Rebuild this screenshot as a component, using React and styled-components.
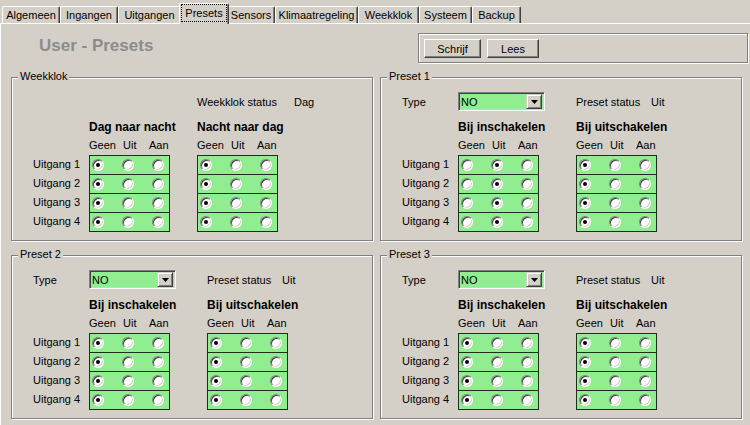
import React from 'react';
import styled, { createGlobalStyle } from 'styled-components';

const GlobalStyle = createGlobalStyle`
  body {
    margin: 0;
    background: #d4d0c8;
    font-family: "Liberation Sans", Arial, sans-serif;
    font-size: 11px;
    color: #000;
  }
`;

const Page = styled.div`
  width: 750px;
  height: 425px;
  overflow: hidden;
  background: #d4d0c8;
`;

const TabStrip = styled.div`
  display: flex;
  align-items: flex-end;
  height: 23px;
  padding-left: 2px;
`;

const Tab = styled.div`
  box-sizing: border-box;
  position: relative;
  z-index: ${p => (p.$active ? 1 : 0)};
  width: ${p => p.$w}px;
  height: ${p => (p.$active ? 21 : 17)}px;
  margin: 0 ${p => (p.$active ? -2 : 0)}px ${p => (p.$active ? -1 : 0)}px;
  display: flex;
  align-items: center;
  justify-content: center;
  background: #d4d0c8;
  border-top: 1px solid #fff;
  border-left: 1px solid #fff;
  border-right: 1px solid #404040;
  border-radius: 2px 2px 0 0;
  box-shadow: inset -1px 0 0 #808080;
  white-space: nowrap;
`;

const FocusText = styled.span`
  outline: 1px dotted #000;
  padding: 1px 3px;
  line-height: 14px;
  margin-top: -2px;
`;

const Panel = styled.div`
  box-sizing: border-box;
  height: 402px;
  border-top: 1px solid #fff;
  border-left: 1px solid #fff;
`;

const Header = styled.div`
  display: flex;
  justify-content: space-between;
  height: 30px;
  margin-top: 9px;
  padding: 0 2px 0 38px;
`;

const Title = styled.div`
  margin-top: 3px;
  font-size: 17px;
  line-height: 20px;
  font-weight: bold;
  color: #8c8c8c;
`;

const etched = `
  border: 1px solid #808080;
  box-shadow: 1px 1px 0 #fff, inset 1px 1px 0 #fff;
`;

const ButtonBox = styled.div`
  box-sizing: border-box;
  width: 330px;
  height: 30px;
  ${etched}
  display: flex;
  align-items: flex-start;
  gap: 6px;
  padding: 5px 0 0 5px;
`;

const Button = styled.button`
  box-sizing: border-box;
  width: ${p => p.$w}px;
  height: 19px;
  padding: 0;
  font-family: inherit;
  font-size: 11px;
  color: #000;
  background: #d4d0c8;
  border: 1px solid;
  border-color: #fff #404040 #404040 #fff;
  box-shadow: inset -1px -1px 0 #808080;
`;

const Groups = styled.div`
  display: grid;
  grid-template-columns: 362px 362px;
  column-gap: 7px;
  row-gap: 14px;
  margin-top: 14px;
  padding-left: 10px;
`;

const Group = styled.div`
  position: relative;
  box-sizing: border-box;
  height: 164px;
  ${etched}
  padding: 14px 0 0 21px;
`;

const Legend = styled.span`
  position: absolute;
  top: -8px;
  left: 6px;
  padding: 0 2px;
  line-height: 13px;
  background: #d4d0c8;
`;

const Body = styled.div`
  display: grid;
  grid-template-columns: 56px ${p => p.$col}px auto;
  grid-template-rows: 19px 24px 20px auto;
`;

const Cell = styled.div`
  display: flex;
  align-items: center;
  white-space: nowrap;
  grid-column: ${p => p.$col || 'auto'};
`;

const Heading = styled.div`
  align-self: end;
  font-size: 12px;
  font-weight: bold;
  line-height: 15px;
  white-space: nowrap;
`;

const ColLabels = styled.div`
  align-self: center;
  display: grid;
  grid-template-columns: 34px 26px auto;
  line-height: 13px;
`;

const StatusLabel = styled.span`
  min-width: ${p => p.$w}px;
`;

const Select = styled.div`
  box-sizing: border-box;
  width: 87px;
  height: 19px;
  display: flex;
  align-items: center;
  justify-content: space-between;
  padding: 2px 2px 2px 2px;
  background: #90ee90;
  border: 1px solid;
  border-color: #808080 #fff #fff #808080;
  box-shadow: inset 1px 1px 0 #404040, inset -1px -1px 0 #d4d0c8;
`;

const DropButton = styled.span`
  box-sizing: border-box;
  width: 16px;
  height: 15px;
  display: flex;
  align-items: center;
  justify-content: center;
  background: #d4d0c8;
  border: 1px solid;
  border-color: #d4d0c8 #404040 #404040 #d4d0c8;
  box-shadow: inset 1px 1px 0 #fff, inset -1px -1px 0 #808080;
`;

const RowLabels = styled.div`
  display: flex;
  flex-direction: column;
`;

const RowLabel = styled.div`
  height: 19px;
  line-height: 19px;
  white-space: nowrap;
`;

const RadioTable = styled.div`
  box-sizing: border-box;
  width: 81px;
  border: 1px solid #1c2e1c;
  background: #90ee90;
`;

const RadioRow = styled.div`
  height: 18px;
  display: flex;
  align-items: center;
  gap: 18px;
  padding-left: 2px;
  & + & {
    border-top: 1px solid #1c2e1c;
  }
`;

const Radio = styled.span`
  box-sizing: border-box;
  width: 12px;
  height: 12px;
  border-radius: 50%;
  display: flex;
  align-items: center;
  justify-content: center;
  background: #fff;
  border: 1px solid;
  border-color: #808080 #fff #fff #808080;
  box-shadow: inset 1px 1px 0 #404040, inset -1px -1px 0 #d4d0c8;
  &::after {
    content: '';
    display: ${p => (p.$on ? 'block' : 'none')};
    width: 4px;
    height: 4px;
    border-radius: 50%;
    background: #000;
  }
`;

const tabs = [
  ['Algemeen', 58],
  ['Ingangen', 58],
  ['Uitgangen', 63],
  ['Presets', 50],
  ['Sensors', 48],
  ['Klimaatregeling', 83],
  ['Weekklok', 61],
  ['Systeem', 53],
  ['Backup', 49],
];

const groups = [
  { title: 'Weekklok', col: 108, headings: ['Dag naar nacht', 'Nacht naar dag'], sel: [0, 0], status: ['Weekklok status', 'Dag'], statusW: 97 },
  { title: 'Preset 1', type: 'NO', col: 118, headings: ['Bij inschakelen', 'Bij uitschakelen'], sel: [1, 0], status: ['Preset status', 'Uit'], statusW: 75 },
  { title: 'Preset 2', type: 'NO', col: 118, headings: ['Bij inschakelen', 'Bij uitschakelen'], sel: [0, 0], status: ['Preset status', 'Uit'], statusW: 75 },
  { title: 'Preset 3', type: 'NO', col: 118, headings: ['Bij inschakelen', 'Bij uitschakelen'], sel: [0, 0], status: ['Preset status', 'Uit'], statusW: 75 },
];

const outputs = ['Uitgang 1', 'Uitgang 2', 'Uitgang 3', 'Uitgang 4'];

const Table = ({ selected }) => (
  <RadioTable>
    {outputs.map(o => (
      <RadioRow key={o}>
        {[0, 1, 2].map(i => (
          <Radio key={i} $on={i === selected} />
        ))}
      </RadioRow>
    ))}
  </RadioTable>
);

const Columns = () => (
  <ColLabels>
    <span>Geen</span>
    <span>Uit</span>
    <span>Aan</span>
  </ColLabels>
);

const GroupBox = ({ g }) => (
  <Group>
    <Legend>{g.title}</Legend>
    <Body $col={g.col}>
      {g.type ? (
        <>
          <Cell>Type</Cell>
          <Cell>
            <Select>
              <span>{g.type}</span>
              <DropButton>
                <svg width="7" height="4" viewBox="0 0 7 4">
                  <path d="M0 0h7L3.5 4z" fill="#000" />
                </svg>
              </DropButton>
            </Select>
          </Cell>
        </>
      ) : null}
      <Cell $col={3}>
        <StatusLabel $w={g.statusW}>{g.status[0]}</StatusLabel>
        <span>{g.status[1]}</span>
      </Cell>
      <Heading style={{ gridColumn: 2 }}>{g.headings[0]}</Heading>
      <Heading>{g.headings[1]}</Heading>
      <Cell $col={2}>
        <Columns />
      </Cell>
      <Columns />
      <RowLabels>
        {outputs.map(o => (
          <RowLabel key={o}>{o}</RowLabel>
        ))}
      </RowLabels>
      <Table selected={g.sel[0]} />
      <Table selected={g.sel[1]} />
    </Body>
  </Group>
);

const App = () => (
  <Page>
    <GlobalStyle />
    <TabStrip>
      {tabs.map(([name, w]) => (
        <Tab key={name} $w={w} $active={name === 'Presets'}>
          {name === 'Presets' ? <FocusText>{name}</FocusText> : name}
        </Tab>
      ))}
    </TabStrip>
    <Panel>
      <Header>
        <Title>User - Presets</Title>
        <ButtonBox>
          <Button $w={57}>Schrijf</Button>
          <Button $w={52}>Lees</Button>
        </ButtonBox>
      </Header>
      <Groups>
        {groups.map(g => (
          <GroupBox key={g.title} g={g} />
        ))}
      </Groups>
    </Panel>
  </Page>
);

export default App;
